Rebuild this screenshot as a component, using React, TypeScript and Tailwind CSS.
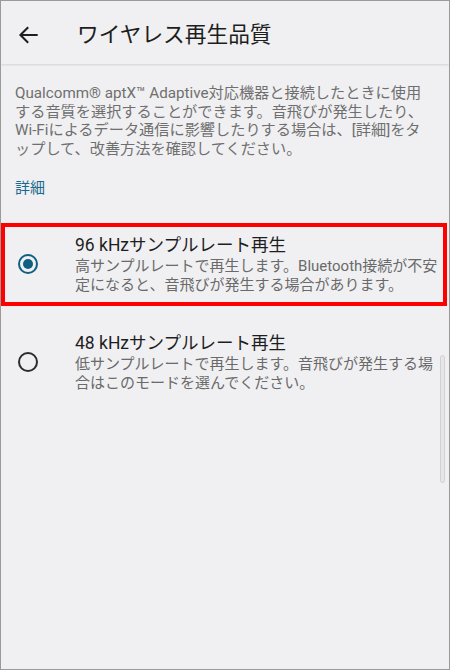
import React from "react";

const font = { fontFamily: "Roboto, 'Noto Sans CJK JP', sans-serif" };

function BackArrow() {
  return (
    <svg width="26" height="26" viewBox="0 0 24 24" fill="none">
      <path
        d="M20 12H5.5M11.5 5.5L5 12l6.5 6.5"
        stroke="#1f1f1f"
        strokeWidth="1.9"
        strokeLinecap="square"
      />
    </svg>
  );
}

function Radio({ checked }: { checked: boolean }) {
  if (checked) {
    return (
      <div className="flex h-[20px] w-[20px] items-center justify-center rounded-full border-[2.5px] border-[#0e5f80]">
        <div className="h-[10px] w-[10px] rounded-full bg-[#0e5f80]" />
      </div>
    );
  }
  return <div className="h-[20px] w-[20px] rounded-full border-2 border-[#2b2b2b]" />;
}

type Option = { title: string; lines: string[]; checked: boolean };

const options: Option[] = [
  {
    title: "96 kHzサンプルレート再生",
    lines: [
      "高サンプルレートで再生します。Bluetooth接続が不安",
      "定になると、音飛びが発生する場合があります。",
    ],
    checked: true,
  },
  {
    title: "48 kHzサンプルレート再生",
    lines: [
      "低サンプルレートで再生します。音飛びが発生する場",
      "合はこのモードを選んでください。",
    ],
    checked: false,
  },
];

export default function App() {
  return (
    <div
      className="relative box-border h-[670px] w-[450px] overflow-hidden border border-[#9a9a9a] bg-[#f0f0f2]"
      style={font}
    >
      <header className="flex h-[63px] items-center pt-[5px] shadow-[0_1px_2px_rgba(0,0,0,0.12)]">
        <div className="ml-[14px] flex w-[62px]">
          <BackArrow />
        </div>
        <h1 className="text-[21.7px] leading-none text-[#1e1e1e]">ワイヤレス再生品質</h1>
      </header>

      <p className="whitespace-nowrap px-[14px] pt-[20px] text-[15.2px] leading-[18.7px] text-[#6f6f6f]">
        Qualcomm® aptX™ Adaptive対応機器と接続したときに使用
        <br />
        する音質を選択することができます。音飛びが発生したり、
        <br />
        Wi-Fiによるデータ通信に影響したりする場合は、[詳細]をタ
        <br />
        ップして、改善方法を確認してください。
      </p>

      <div className="mt-[19px] px-[14px] text-[15px] leading-[20px] text-[#1a6a8e]">詳細</div>

      <div className="mt-[18px]">
        {options.map((o) => (
          <div key={o.title} className="relative flex items-center pb-[18px] pt-[17px]">
            <div className="flex w-[74px] justify-start pl-[17px]">
              <Radio checked={o.checked} />
            </div>
            <div className="whitespace-nowrap">
              <div className="text-[17.5px] leading-[24px] text-[#1e1e1e]">{o.title}</div>
              <div className="text-[15px] leading-[19.5px] text-[#6a6a6a]">
                {o.lines[0]}
                <br />
                {o.lines[1]}
              </div>
            </div>
            {o.checked && (
              <div className="pointer-events-none absolute bottom-[8px] left-0 right-[2px] top-[7px] border-4 border-[#ff0000]" />
            )}
          </div>
        ))}
      </div>

      <div className="absolute right-[4px] top-[354px] h-[128px] w-[5px] rounded-full border border-[#d2d2d4] bg-[#e6e6e8]" />
    </div>
  );
}
